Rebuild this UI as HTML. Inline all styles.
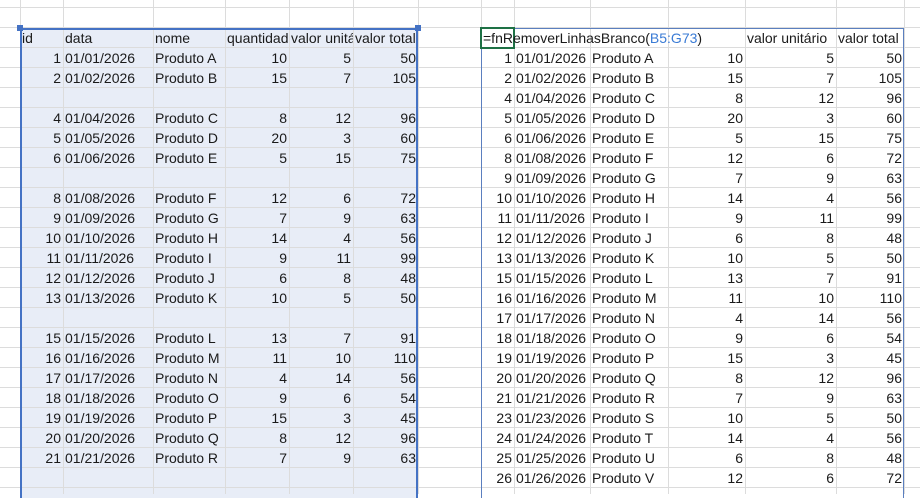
<!DOCTYPE html>
<html><head><meta charset="utf-8"><style>
body{margin:0;width:920px;height:494px;overflow:hidden;background:#fff;font-family:"Liberation Sans",Arial,sans-serif;font-size:14px;color:#1a1a1a;position:relative}
.grid{position:absolute;inset:0;background-image:repeating-linear-gradient(to bottom,transparent 0,transparent 7px,#dcdcdc 7px,#dcdcdc 8px,transparent 8px,transparent 20px);background-size:100% 20px;background-position:0 0}
.v{position:absolute;top:0;height:494px;width:1px;background:#dcdcdc}
.sel{position:absolute;left:20px;top:28px;width:398px;height:470px;background:#e8edf7;border:2px solid #4472c4;border-bottom:none;box-sizing:border-box}
.h{position:absolute;width:6px;height:6px;background:#4472c4}
.row{position:absolute;height:20px;line-height:20px;display:flex}
.row div{overflow:hidden;white-space:nowrap;box-sizing:border-box;padding:0 2px}
.r{text-align:right}
.rt{position:absolute;left:481px;top:28px;width:423px;height:470px;border:1px solid #5b7fbf;border-bottom:none;box-sizing:border-box}
.act{position:absolute;left:480px;top:27px;width:35px;height:22px;border:2px solid #1e7145;box-sizing:border-box}
</style></head><body>
<div class="sel"></div>
<div class="grid"></div>
<div class="v" style="left:20px"></div><div class="v" style="left:63px"></div><div class="v" style="left:153px"></div><div class="v" style="left:225px"></div><div class="v" style="left:289px"></div><div class="v" style="left:353px"></div><div class="v" style="left:418px"></div><div class="v" style="left:481px"></div><div class="v" style="left:514px"></div><div class="v" style="left:590px"></div><div class="v" style="left:668px"></div><div class="v" style="left:745px"></div><div class="v" style="left:836px"></div><div class="v" style="left:904px"></div>
<div class="sel" style="background:transparent"></div>
<div class="h" style="left:17px;top:25px"></div><div class="h" style="left:415px;top:25px"></div>
<div class="rt"></div>
<div class="act"></div>
<div id="L"></div><div id="R"></div>
<div class="row" style="left:20px;top:28px"><div style="width:43px">id</div><div style="width:90px">data</div><div style="width:72px">nome</div><div style="width:64px">quantidade</div><div style="width:64px">valor unitário</div><div style="width:65px">valor total</div></div>
<div class="row" style="left:481px;top:28px"><div style="width:264px;overflow:visible">=fnRemoverLinhasBranco(<span style="color:#3a7bd5">B5:G73</span>)</div><div style="width:91px">valor unitário</div><div style="width:68px">valor total</div></div>
<script>
var all={1:[10,5],2:[15,7],4:[8,12],5:[20,3],6:[5,15],8:[12,6],9:[7,9],10:[14,4],11:[9,11],12:[6,8],13:[10,5],15:[13,7],16:[11,10],17:[4,14],18:[9,6],19:[15,3],20:[8,12],21:[7,9],23:[10,5],24:[14,4],25:[6,8],26:[12,6]};
function p(n){return n<10?'0'+n:''+n}
function nm(i){var ids=Object.keys(all).map(Number);return 'Produto '+String.fromCharCode(65+ids.indexOf(i))}
var h='';var y=48;
[1,2,0,4,5,6,0,8,9,10,11,12,13,0,15,16,17,18,19,20,21].forEach(function(i){
if(i){var a=all[i];h+='<div class="row" style="left:20px;top:'+y+'px"><div class="r" style="width:43px">'+i+'</div><div style="width:90px">01/'+p(i)+'/2026</div><div style="width:72px">'+nm(i)+'</div><div class="r" style="width:64px">'+a[0]+'</div><div class="r" style="width:64px">'+a[1]+'</div><div class="r" style="width:65px">'+a[0]*a[1]+'</div></div>';}
y+=20;});
document.getElementById('L').innerHTML=h;
h='';y=48;
Object.keys(all).map(Number).forEach(function(i){var a=all[i];
h+='<div class="row" style="left:481px;top:'+y+'px"><div class="r" style="width:33px">'+i+'</div><div style="width:76px">01/'+p(i)+'/2026</div><div style="width:78px">'+nm(i)+'</div><div class="r" style="width:77px">'+a[0]+'</div><div class="r" style="width:91px">'+a[1]+'</div><div class="r" style="width:68px">'+a[0]*a[1]+'</div></div>';y+=20;});
document.getElementById('R').innerHTML=h;
</script>
</body></html>
